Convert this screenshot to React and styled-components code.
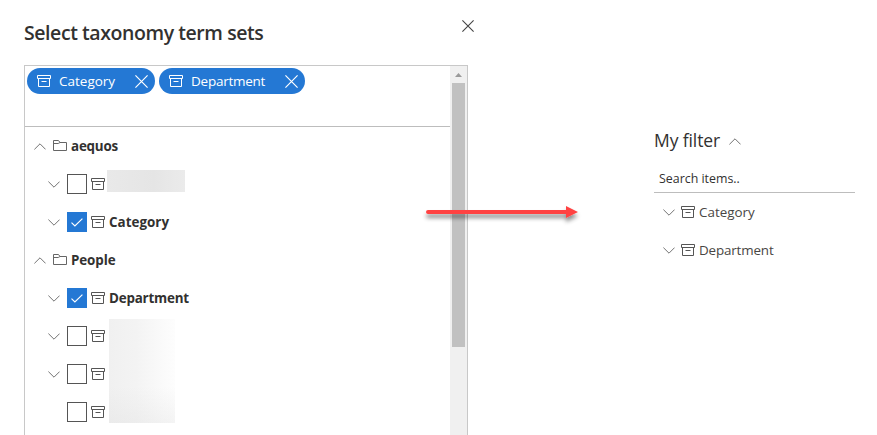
import React from "react";
import styled, { createGlobalStyle } from "styled-components";

const GlobalStyle = createGlobalStyle`
  *, *::before, *::after { box-sizing: border-box; }
  html, body { margin: 0; overflow: hidden; background: #fff; }
  body { font-family: "Open Sans", "Noto Sans", sans-serif; color: #323130; }
  svg { display: block; flex: none; }
`;

const Page = styled.main`
  position: relative;
  display: flex;
  width: 877px;
  height: 435px;
  overflow: hidden;
  background: #fff;
`;

const Dialog = styled.section`
  display: flex;
  flex-direction: column;
  width: 474px;
  padding-left: 24px;
`;

const DialogHeader = styled.header`
  display: flex;
  justify-content: space-between;
  height: 65px;
`;

const Text = styled.span`
  white-space: nowrap;
  font-size: ${(p) => p.$size}px;
  font-weight: ${(p) => p.$weight || 400};
  letter-spacing: ${(p) => p.$spacing || 0}px;
  line-height: 20px;
`;

const Title = styled.h1`
  margin: 23px 0 0;
  font-size: 19.5px;
  font-weight: 600;
  line-height: 20px;
  letter-spacing: -0.43px;
  white-space: nowrap;
`;

const CloseButton = styled.button`
  align-self: flex-start;
  margin-top: 20px;
  padding: 0;
  border: 0;
  background: none;
  color: #444;
`;

const Panel = styled.div`
  display: flex;
  width: 444px;
  height: 370px;
  border: 1px solid #c8c8c8;
  border-bottom: 0;
`;

const PanelBody = styled.div`
  width: 425px;
`;

const TagPicker = styled.div`
  display: flex;
  align-items: flex-start;
  gap: 4px;
  height: 61px;
  padding: 2px;
  border-bottom: 1px solid #bdbdbd;
`;

const Tag = styled.div`
  display: flex;
  align-items: center;
  width: ${(p) => p.$width}px;
  height: 26px;
  padding: 0 7px 0 10px;
  border-radius: 13px;
  background: #2478d4;
  color: #fff;

  ${Text} { margin-left: 8px; }
  > svg:last-child { margin-left: auto; }
`;

const Tree = styled.div`
  position: relative;
`;

const Row = styled.div`
  display: flex;
  align-items: center;
  height: 38px;
  padding-left: ${(p) => p.$indent}px;
  color: #555;

  ${Text} { color: #323130; }
`;

const FolderText = styled(Text)`
  margin-left: 4px;
`;

const Folder = styled.span`
  margin: -1px 0 0 7px;
`;

const Twisty = styled.span`
  width: 12px;
  height: 7px;
  color: #777;
`;

const Checkbox = styled.span`
  display: grid;
  place-items: center;
  width: 20px;
  height: 20px;
  margin: 0 4px 0 7px;
  border: 1px solid ${(p) => (p.$checked ? "#2478d4" : "#555")};
  background: ${(p) => (p.$checked ? "#2478d4" : "#fff")};
  color: #fff;
`;

const TermText = styled(Text)`
  margin-left: 4px;
`;

const MaskedLabel = styled.span`
  width: 78px;
  height: 22px;
  margin: -6px 0 0 2px;
  background: linear-gradient(90deg, #e9e9e9, #e5e5e5 60%, #ebebeb);
`;

const MaskedColumn = styled.span`
  position: absolute;
  left: 84px;
  top: 192px;
  width: 66px;
  height: 104px;
  background:
    linear-gradient(0deg, rgba(222, 222, 222, 0.3), rgba(255, 255, 255, 0) 35%),
    linear-gradient(90deg, #f0f0f0 0%, #f3f3f3 40%, #f9f9f9 75%, #fdfdfd);
`;

const Scrollbar = styled.div`
  display: flex;
  flex-direction: column;
  align-items: center;
  width: 17px;
  background: #f0f0f0;
`;

const ScrollArrow = styled.span`
  width: 7px;
  height: 4px;
  margin: 7px 0 6px;
  background: #9a9a9a;
  clip-path: polygon(50% 0, 100% 100%, 0 100%);
`;

const Thumb = styled.span`
  width: 13px;
  height: 264px;
  background: #c1c1c1;
`;

const Filter = styled.section`
  width: 201px;
  margin: 130px 0 0 180px;
`;

const FilterHeader = styled.header`
  display: flex;
  align-items: center;
  gap: 9px;
  height: 22px;

  ${Text} { margin-bottom: 2px; }
  svg { margin-top: 1px; }
`;

const Search = styled.div`
  display: flex;
  align-items: center;
  height: 30px;
  margin-top: 11px;
  padding: 2px 0 0 5px;
  border-bottom: 1px solid #bdbdbd;
`;

const FilterRow = styled.div`
  display: flex;
  align-items: center;
  height: 38px;
  padding-left: 9px;
  color: #555;

  svg + svg { margin-left: 6px; }
  ${Text} { margin-left: 4px; color: #484644; }
`;

const ArrowOverlay = styled.svg`
  position: absolute;
  left: 418px;
  top: 198px;
`;

const Chevron = ({ up }) => (
  <svg width="12" height="7" viewBox="0 0 12 7" fill="none" stroke="#737373">
    <path d={up ? "M.4 6.4 6 .8l5.6 5.6" : "M.4.6 6 6.2 11.6.6"} />
  </svg>
);

const Cross = ({ size = 12 }) => (
  <svg width={size} height={size} viewBox="0 0 12 12" fill="none" stroke="currentColor" strokeWidth="1.1">
    <path d="m.4.4 11.2 11.2M11.6.4.4 11.6" />
  </svg>
);

const TermSetIcon = () => (
  <svg width="14" height="12" viewBox="0 0 14 12" fill="none" stroke="currentColor">
    <path d="M.5.5h13v3H.5zM1.5 3.5v8h11v-8M4.5 6.5h5" />
  </svg>
);

const FolderIcon = () => (
  <svg width="14" height="11" viewBox="0 0 14 11" fill="none" stroke="#666">
    <path d="M.5 10.5V.5h5l1.5 2h6.5v8zM.5 3.5h4.7L7 2.5" />
  </svg>
);

const CheckIcon = () => (
  <svg width="12" height="9" viewBox="0 0 12 9" fill="none" stroke="currentColor" strokeWidth="1.2">
    <path d="m.5 4.6 3.4 3.4L11.4.6" />
  </svg>
);

const Group = ({ name, spacing }) => (
  <Row $indent={9}>
    <Twisty><Chevron up /></Twisty>
    <Folder><FolderIcon /></Folder>
    <FolderText $size={13.4} $weight={700} $spacing={spacing}>{name}</FolderText>
  </Row>
);

const Term = ({ name, spacing, checked, leaf, masked }) => (
  <Row $indent={23}>
    <Twisty>{!leaf && <Chevron />}</Twisty>
    <Checkbox $checked={checked}>{checked && <CheckIcon />}</Checkbox>
    <TermSetIcon />
    {name && <TermText $size={13.4} $weight={700} $spacing={spacing}>{name}</TermText>}
    {masked && <MaskedLabel />}
  </Row>
);

export default function App() {
  return (
    <Page>
      <GlobalStyle />
      <Dialog>
        <DialogHeader>
          <Title>Select taxonomy term sets</Title>
          <CloseButton aria-label="Close"><Cross /></CloseButton>
        </DialogHeader>
        <Panel>
          <PanelBody>
            <TagPicker>
              <Tag $width={128}>
                <TermSetIcon /><Text $size={13.5}>Category</Text><Cross size={13} />
              </Tag>
              <Tag $width={146}>
                <TermSetIcon /><Text $size={13.5} $spacing={-0.25}>Department</Text><Cross size={13} />
              </Tag>
            </TagPicker>
            <Tree>
              <Group name="aequos" spacing={-0.2} />
              <Term masked />
              <Term name="Category" checked spacing={0.02} />
              <Group name="People" spacing={-0.1} />
              <Term name="Department" checked spacing={-0.2} />
              <Term />
              <Term />
              <Term leaf />
              <MaskedColumn />
            </Tree>
          </PanelBody>
          <Scrollbar><ScrollArrow /><Thumb /></Scrollbar>
        </Panel>
      </Dialog>
      <Filter>
        <FilterHeader>
          <Text $size={17.5} $spacing={-0.1}>My filter</Text>
          <Chevron up />
        </FilterHeader>
        <Search><Text $size={12.4}>Search items..</Text></Search>
        <FilterRow><Chevron /><TermSetIcon /><Text $size={13.4}>Category</Text></FilterRow>
        <FilterRow><Chevron /><TermSetIcon /><Text $size={13.4} $spacing={-0.15}>Department</Text></FilterRow>
      </Filter>
      <ArrowOverlay width="170" height="34" viewBox="0 0 170 34">
        <defs>
          <filter id="arrow-shadow" x="-10%" y="-100%" width="120%" height="350%">
            <feDropShadow dx="0" dy="4" stdDeviation="2" floodColor="#000" floodOpacity=".45" />
          </filter>
        </defs>
        <path d="M10 12h138V8l12 6-12 6v-4H10a2 2 0 0 1 0-4z" fill="#ff4343" filter="url(#arrow-shadow)" />
      </ArrowOverlay>
    </Page>
  );
}
